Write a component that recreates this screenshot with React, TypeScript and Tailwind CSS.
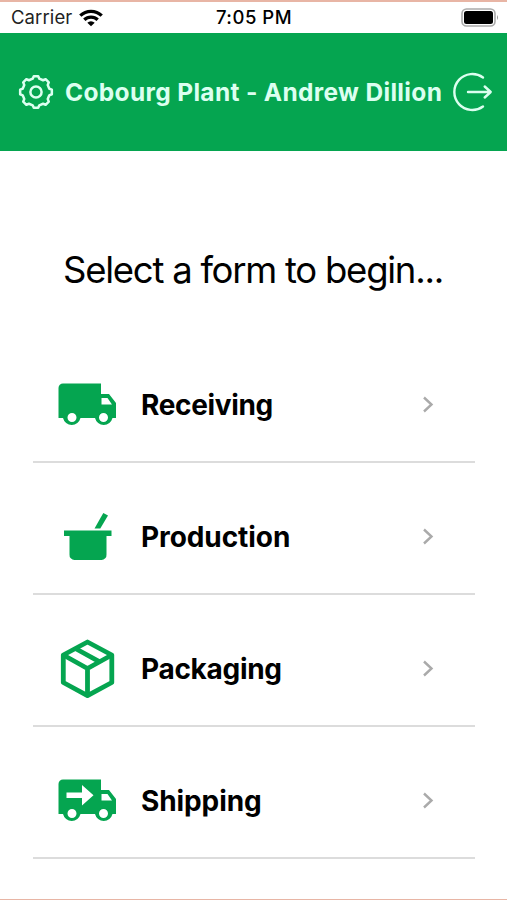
import React from "react";

const TRUCK =
  "M5 1.5H43V12H51L58 21V36H54.5A9 9 0 0 1 37 36H22.5A9 9 0 0 1 5 36H.5V6A4.5 4.5 0 0 1 5 1.5ZM43.5 16V22.5H54L49.5 16ZM14 31A4.5 4.5 0 1 0 14 40A4.5 4.5 0 1 0 14 31ZM45.5 31A4.5 4.5 0 1 0 45.5 40A4.5 4.5 0 1 0 45.5 31Z";

function Truck({ arrow = false }: { arrow?: boolean }) {
  return (
    <svg width="60" height="60" viewBox="0 -7 60 60">
      <path d={TRUCK} fill="#05a550" fillRule="evenodd" />
      {arrow && <path d="M8.5 14.5H24V7L35.5 17.2L24 27.5V20H8.5Z" fill="#fff" />}
    </svg>
  );
}

function Pot() {
  return (
    <svg width="60" height="60" viewBox="0 0 60 60" fill="#05a550">
      <path d="M6 23.5H53.5V29H48.5V47.5A5 5 0 0 1 43.5 53H16.5A5 5 0 0 1 11.5 47.5V29H6Z" />
      <path d="M36.5 21.5L45.3 6L50 8.5L42.3 21.5Z" />
    </svg>
  );
}

function Box() {
  return (
    <svg
      width="60"
      height="60"
      viewBox="0 0 60 60"
      fill="none"
      stroke="#05a550"
      strokeWidth="4.8"
      strokeLinejoin="round"
    >
      <path d="M29.5 3L53.8 16V43.5L29.5 56.7L5.3 43.5V16Z" />
      <path d="M5.3 16L29.5 29.5L53.8 16M29.5 29.5V56M17.4 9.5L41.7 22.8" />
    </svg>
  );
}

const gearPoints = Array.from({ length: 8 }, (_, i) =>
  [
    [-14, 13.7],
    [-8, 16],
    [8, 16],
    [14, 13.7],
  ]
    .map(([offset, radius]) => {
      const angle = ((i * 45 + offset - 90) * Math.PI) / 180;
      return `${18 + radius * Math.cos(angle)},${18 + radius * Math.sin(angle)}`;
    })
    .join(" ")
).join(" ");

function Gear() {
  return (
    <svg className="shrink-0" width="36" height="36" viewBox="0 0 36 36" fill="none" stroke="#dcfff0" strokeWidth="2.5" strokeLinejoin="round">
      <polygon points={gearPoints} />
      <circle cx="18" cy="18" r="5.6" />
    </svg>
  );
}

function Logout() {
  return (
    <svg className="shrink-0" width="42" height="40" viewBox="0 0 42 40" fill="none" stroke="#dcfff0" strokeWidth="2.4" strokeLinecap="round" strokeLinejoin="round">
      <path d="M31 5.5A18 18 0 1 0 31 34.5" />
      <path d="M16 20H38.5M32.7 14.5L38.7 20L32.7 25.5" />
    </svg>
  );
}

function Wifi() {
  return (
    <svg width="24" height="18" viewBox="0 0 24 18" fill="none" stroke="#000" strokeWidth="3.3">
      <path d="M1.3 6.6A15.4 15.4 0 0 1 22.7 6.6" />
      <path d="M5.3 10.8A9.7 9.7 0 0 1 18.7 10.8" />
      <path d="M12 17.3L8.3 13.7A5.3 5.3 0 0 1 15.7 13.7Z" fill="#000" stroke="none" />
    </svg>
  );
}

function Battery() {
  return (
    <svg width="38" height="20" viewBox="0 0 38 20">
      <rect x="1" y="1" width="33" height="17" rx="4.5" fill="#fff" stroke="#aaa" strokeWidth="1.6" />
      <rect x="3" y="3" width="29" height="13" rx="2.5" fill="#000" />
      <path d="M36 7Q38 9.5 36 12Z" fill="#999" />
    </svg>
  );
}

const rows = [
  { label: "Receiving", icon: <Truck />, tracking: "tracking-[-0.35px]" },
  { label: "Production", icon: <Pot />, tracking: "tracking-[-0.08px]" },
  { label: "Packaging", icon: <Box />, tracking: "tracking-[-0.3px]" },
  { label: "Shipping", icon: <Truck arrow />, tracking: "tracking-[-0.1px]" },
];

export default function App() {
  return (
    <div className="flex h-[900px] w-[507px] flex-col overflow-hidden border-t-2 border-b border-[#e8b5a5] bg-white font-['Inter','Liberation_Sans',sans-serif] text-black">
      <div className="grid h-[31px] shrink-0 grid-cols-3 items-center pr-2 pl-[11px] text-[18.5px] text-[#222]">
        <div className="flex items-center gap-[7px]">
          <span className="tracking-[0.1px]">Carrier</span>
          <Wifi />
        </div>
        <span className="mr-[2px] justify-self-center font-medium tracking-[0.5px] whitespace-nowrap text-black">7:05 PM</span>
        <div className="justify-self-end">
          <Battery />
        </div>
      </div>
      <header className="flex h-[118px] shrink-0 items-center bg-[#05a550] pl-[17.5px]">
        <Gear />
        <h1 className="ml-[11.5px] w-[387px] shrink-0 text-[24.5px] font-bold tracking-[0.33px] whitespace-nowrap text-[#dcfff0]">
          Cobourg Plant - Andrew Dillion
        </h1>
        <Logout />
      </header>
      <h2 className="flex h-[180px] shrink-0 items-center pt-[58px] pl-[63px] text-[36.5px] tracking-[-1.25px] whitespace-nowrap">
        Select a form to begin...
      </h2>
      <ul className="mr-8 ml-[33px]">
        {rows.map((row) => (
          <li key={row.label} className="flex h-[131.9px] items-center border-b-2 border-[#dcdcdc] pt-[19px] pl-[25px]">
            {row.icon}
            <span className={`ml-[23px] text-[28px] font-bold ${row.tracking}`}>{row.label}</span>
            <svg className="mr-[40px] ml-auto" width="14" height="20" viewBox="0 0 14 20" fill="none" stroke="#aaa" strokeWidth="2.4">
              <path d="M3 2.5L10.5 9.5L3 16.5" />
            </svg>
          </li>
        ))}
      </ul>
    </div>
  );
}
